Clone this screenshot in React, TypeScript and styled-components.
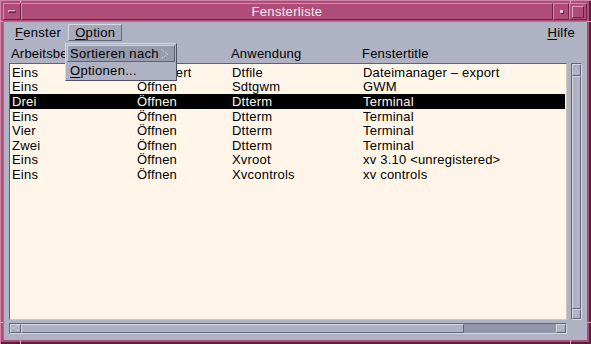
import React from "react";
import styled, { createGlobalStyle } from "styled-components";

const GlobalStyle = createGlobalStyle`
  html, body {
    margin: 0;
    padding: 0;
    background: #aeb2c3;
  }
  body {
    font-family: "Liberation Sans", Arial, sans-serif;
    font-size: 13px;
    color: #000;
  }
`;

type Row = { ws: string; status: string; app: string; title: string; selected?: boolean };

const rows: Row[] = [
  { ws: "Eins", status: "Minimiert", app: "Dtfile", title: "Dateimanager – export" },
  { ws: "Eins", status: "Öffnen", app: "Sdtgwm", title: "GWM" },
  { ws: "Drei", status: "Öffnen", app: "Dtterm", title: "Terminal", selected: true },
  { ws: "Eins", status: "Öffnen", app: "Dtterm", title: "Terminal" },
  { ws: "Vier", status: "Öffnen", app: "Dtterm", title: "Terminal" },
  { ws: "Zwei", status: "Öffnen", app: "Dtterm", title: "Terminal" },
  { ws: "Eins", status: "Öffnen", app: "Xvroot", title: "xv 3.10 <unregistered>" },
  { ws: "Eins", status: "Öffnen", app: "Xvcontrols", title: "xv controls" },
];

export default function App() {
  return (
    <>
      <GlobalStyle />
      <Frame>
        {/* resize-corner marks of the window frame */}
        <Notch $x={20} $y={0} $w={1} $h={3} />
        <Notch $x={570} $y={0} $w={1} $h={3} />
        <Notch $x={20} $y={340} $w={1} $h={4} />
        <Notch $x={570} $y={340} $w={1} $h={4} />
        <Notch $x={0} $y={21} $w={3} $h={1} />
        <Notch $x={587} $y={21} $w={4} $h={1} />
        <Notch $x={0} $y={322} $w={3} $h={1} />
        <Notch $x={587} $y={322} $w={4} $h={1} />

        <TitleBar>
          <TitleButton $w={18}>
            <MenuGlyph />
          </TitleButton>
          <TitleText>Fensterliste</TitleText>
          <TitleButton $w={16}>
            <MinGlyph />
          </TitleButton>
          <TitleButton $w={18}>
            <MaxGlyph />
          </TitleButton>
        </TitleBar>

        <Client>
          <MenuBar>
            <MenuItem>
              <Mnemonic>F</Mnemonic>enster
            </MenuItem>
            <MenuItem $active>
              <Mnemonic>O</Mnemonic>ption
            </MenuItem>
            <MenuItem $right>
              <Mnemonic>H</Mnemonic>ilfe
            </MenuItem>
          </MenuBar>

          <HeaderRow>
            <Cell>Arbeitsbereich</Cell>
            <Cell>Status</Cell>
            <Cell>Anwendung</Cell>
            <Cell>Fenstertitle</Cell>
          </HeaderRow>

          <ListArea>
            <ListBox>
              {rows.map((r, i) => (
                <ListRow key={i} $selected={r.selected}>
                  <Cell>{r.ws}</Cell>
                  <Cell>{r.status}</Cell>
                  <Cell>{r.app}</Cell>
                  <Cell>{r.title}</Cell>
                </ListRow>
              ))}
            </ListBox>

            <VScroll>
              <ArrowBox $h={12}>
                <Arrow dir="up" />
              </ArrowBox>
              <VThumb />
              <ArrowBox $h={10}>
                <Arrow dir="down" />
              </ArrowBox>
            </VScroll>

            <HScroll>
              <ArrowBox $w={11}>
                <Arrow dir="left" />
              </ArrowBox>
              <HThumb />
              <HTrough />
              <ArrowBox $w={10}>
                <Arrow dir="right" />
              </ArrowBox>
            </HScroll>
          </ListArea>
        </Client>

        <PopupMenu>
          <PopupItem $highlight>
            Sortieren nach
            <SubArrow viewBox="0 0 8 10" width="8" height="10">
              <path d="M0.5 0.5 L7 5 L0.5 9.5" fill="none" stroke="#dcdee8" strokeWidth="1" strokeDasharray="1 1" />
            </SubArrow>
          </PopupItem>
          <PopupItem>
            <Mnemonic>O</Mnemonic>ptionen...
          </PopupItem>
        </PopupMenu>
      </Frame>
    </>
  );
}

const Arrow = ({ dir }: { dir: "up" | "down" | "left" | "right" }) => {
  const d = {
    up: "M1.5 8.5 L4.5 1.5 L7.5 8.5 Z",
    down: "M1.5 1.5 L4.5 8.5 L7.5 1.5 Z",
    left: "M8.5 1.5 L1.5 4.5 L8.5 7.5 Z",
    right: "M1.5 1.5 L8.5 4.5 L1.5 7.5 Z",
  }[dir];
  return (
    <svg width="9" height="9" viewBox="0 0 10 10">
      <path d={d} fill="none" stroke="#dfe1ea" strokeWidth="1" strokeDasharray="1 1" />
    </svg>
  );
};

const Frame = styled.div`
  position: relative;
  width: 591px;
  height: 344px;
  box-sizing: border-box;
  padding: 3px 4px 4px 3px;
  display: flex;
  flex-direction: column;
  background: #b04c78;
  box-shadow: inset 1px 1px 0 #cf86a6, inset -2px -2px 0 #5c1d3a;
`;

const Notch = styled.div<{ $x: number; $y: number; $w: number; $h: number }>`
  position: absolute;
  left: ${(p) => p.$x}px;
  top: ${(p) => p.$y}px;
  width: ${(p) => p.$w}px;
  height: ${(p) => p.$h}px;
  background: #e0a2bc;
`;

const TitleBar = styled.div`
  height: 17px;
  margin-bottom: 1px;
  display: flex;
`;

const TitleButton = styled.div<{ $w: number }>`
  width: ${(p) => p.$w}px;
  box-sizing: border-box;
  border: 1px solid;
  border-color: #d88aac #6a2444 #6a2444 #d88aac;
  display: flex;
  align-items: center;
  justify-content: center;
`;

const MenuGlyph = styled.div`
  width: 8px;
  height: 3px;
  box-sizing: border-box;
  border: 1px solid;
  border-color: #e2a4be #6a2444 #6a2444 #e2a4be;
`;

const MinGlyph = styled.div`
  width: 3px;
  height: 3px;
  background: #e8c0d2;
  box-shadow: 1px 1px 0 #6a2444;
`;

const MaxGlyph = styled.div`
  width: 12px;
  height: 12px;
  box-sizing: border-box;
  border: 1px solid;
  border-color: #e2a4be #6a2444 #6a2444 #e2a4be;
`;

const TitleText = styled.div`
  flex: 1;
  box-sizing: border-box;
  border: 1px solid;
  border-color: #d88aac #6a2444 #6a2444 #d88aac;
  color: #f6eaf0;
  text-align: center;
  font-size: 13px;
  line-height: 15px;
  letter-spacing: 0.3px;
`;

const Client = styled.div`
  flex: 1;
  display: flex;
  flex-direction: column;
  padding: 0 5px 6px 6px;
  background: #aeb2c3;
  box-shadow: inset 1px 1px 0 #7d8193;
`;

const MenuBar = styled.div`
  height: 23px;
  box-sizing: border-box;
  padding-top: 3px;
  display: flex;
  align-items: flex-start;
  margin-left: -1px;
`;

const MenuItem = styled.div<{ $active?: boolean; $right?: boolean }>`
  height: 17px;
  box-sizing: border-box;
  padding: 0 6px;
  line-height: 15px;
  letter-spacing: 0.3px;
  border: 1px solid transparent;
  margin-left: ${(p) => (p.$right ? "auto" : "0")};
  background: ${(p) => (p.$active ? "#a5a9ba" : "transparent")};
  border-color: ${(p) => (p.$active ? "#d5d7e1 #62667a #62667a #d5d7e1" : "transparent")};
`;

const Mnemonic = styled.span`
  text-decoration: underline;
  text-underline-offset: 2px;
`;

const HeaderRow = styled.div`
  height: 19px;
  display: grid;
  grid-template-columns: 125px 95px 131px 1fr;
  padding-left: 2px;
  align-items: center;
  letter-spacing: 0.2px;
`;

const Cell = styled.div`
  white-space: nowrap;
  overflow: hidden;
`;

const ListArea = styled.div`
  flex: 1;
  display: grid;
  grid-template-columns: 1fr 11px;
  grid-template-rows: 1fr 11px;
  column-gap: 4px;
  row-gap: 3px;
`;

const ListBox = styled.div`
  box-sizing: border-box;
  border: 1px solid;
  border-color: #5e6274 #cfcab8 #cfcab8 #5e6274;
  background: #fff6e9;
  padding-top: 1px;
  overflow: hidden;
`;

const ListRow = styled.div<{ $selected?: boolean }>`
  height: 14.6px;
  display: grid;
  grid-template-columns: 125px 95px 131px 1fr;
  align-items: center;
  padding-left: 2px;
  margin-right: 1px;
  letter-spacing: 0.2px;
  background: ${(p) => (p.$selected ? "#000" : "transparent")};
  color: ${(p) => (p.$selected ? "#fff6e9" : "#000")};
`;

const VScroll = styled.div`
  display: flex;
  flex-direction: column;
  box-sizing: border-box;
  border: 1px solid;
  border-color: #62667a #d5d7e1 #d5d7e1 #62667a;
`;

const HScroll = styled.div`
  display: flex;
  box-sizing: border-box;
  border: 1px solid;
  border-color: #62667a #d5d7e1 #d5d7e1 #62667a;
`;

const ArrowBox = styled.div<{ $w?: number; $h?: number }>`
  flex: none;
  ${(p) => (p.$w ? `width: ${p.$w}px;` : "")}
  ${(p) => (p.$h ? `height: ${p.$h}px;` : "")}
  box-sizing: border-box;
  border: 1px solid;
  border-color: #d5d7e1 #62667a #62667a #d5d7e1;
  background: #a8acbd;
  display: flex;
  align-items: center;
  justify-content: center;
`;

const VThumb = styled.div`
  flex: 1;
  box-sizing: border-box;
  border: 1px solid;
  border-color: #d5d7e1 #62667a #62667a #d5d7e1;
  background: #aeb2c3;
`;

const HThumb = styled.div`
  width: 443px;
  box-sizing: border-box;
  border: 1px solid;
  border-color: #d5d7e1 #62667a #62667a #d5d7e1;
  background: #aeb2c3;
`;

const HTrough = styled.div`
  flex: 1;
  background: #9296a8;
`;

const PopupMenu = styled.div`
  position: absolute;
  left: 65px;
  top: 43px;
  width: 112px;
  box-sizing: border-box;
  padding: 1px;
  background: #aeb2c3;
  border: 1px solid;
  border-color: #d5d7e1 #4e5266 #4e5266 #d5d7e1;
  display: flex;
  flex-direction: column;
`;

const PopupItem = styled.div<{ $highlight?: boolean }>`
  height: 17px;
  box-sizing: border-box;
  padding: 0 2px;
  display: flex;
  align-items: center;
  letter-spacing: 0.3px;
  border: 1px solid;
  border-color: ${(p) => (p.$highlight ? "#cfd1dc #5e6276 #5e6276 #cfd1dc" : "transparent")};
  background: ${(p) => (p.$highlight ? "#979bad" : "transparent")};
`;

const SubArrow = styled.svg`
  margin-left: auto;
  margin-right: 3px;
`;
